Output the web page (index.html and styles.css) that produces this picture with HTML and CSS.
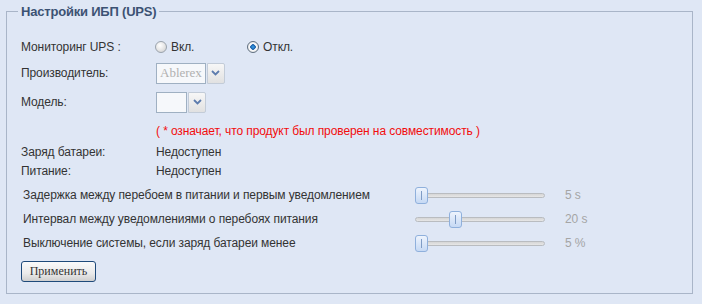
FILE: index.html
```html
<!DOCTYPE html>
<html lang="ru">
<head>
  <meta charset="UTF-8" />
  <title>Настройки ИБП (UPS)</title>
  <link rel="stylesheet" href="styles.css">
</head>
<body>
  <fieldset class="ups">
    <legend>Настройки ИБП (UPS)</legend>

    <div class="row">
      <span class="label">Мониторинг UPS :</span>
      <label class="radio"><input type="radio" name="mon"> Вкл.</label>
      <label class="radio"><input type="radio" name="mon" checked> Откл.</label>
    </div>

    <div class="row maker">
      <span class="label">Производитель:</span>
      <div class="select disabled">
        <span class="select-text">Ablerex</span>
        <span class="select-arrow"><svg width="9" height="6" viewBox="0 0 9 6"><path d="M1 1 L4.5 4.5 L8 1" fill="none" stroke="#5d7cae" stroke-width="1.8"/></svg></span>
      </div>
    </div>

    <div class="row model">
      <span class="label">Модель:</span>
      <div class="select">
        <span class="select-text empty"></span>
        <span class="select-arrow"><svg width="9" height="6" viewBox="0 0 9 6"><path d="M1 1 L4.5 4.5 L8 1" fill="none" stroke="#5d7cae" stroke-width="1.8"/></svg></span>
      </div>
    </div>

    <div class="row note">( * означает, что продукт был проверен на совместимость )</div>

    <div class="row short">
      <span class="label">Заряд батареи:</span>
      <span>Недоступен</span>
    </div>
    <div class="row short">
      <span class="label">Питание:</span>
      <span>Недоступен</span>
    </div>

    <div class="sliders">
      <div class="srow">
        <span class="slabel">Задержка между перебоем в питании и первым уведомлением</span>
        <div class="track"><span class="thumb" style="left: -1px"></span></div>
        <span class="value">5 s</span>
      </div>
      <div class="srow">
        <span class="slabel">Интервал между уведомлениями о перебоях питания</span>
        <div class="track"><span class="thumb" style="left: 33px"></span></div>
        <span class="value">20 s</span>
      </div>
      <div class="srow">
        <span class="slabel">Выключение системы, если заряд батареи менее</span>
        <div class="track"><span class="thumb" style="left: -1px"></span></div>
        <span class="value">5 %</span>
      </div>
    </div>

    <button class="apply">Применить</button>
  </fieldset>
</body>
</html>
```

FILE: styles.css
```css
* { box-sizing: border-box; }

body {
  margin: 0;
  background: #dfe7f5;
  font-family: 'Liberation Sans', Arial, sans-serif;
  font-size: 12px;
  letter-spacing: -0.1px;
  color: #333;
}

.ups {
  margin: 4px 9px 0 6px;
  height: 290px;
  border: 1px solid #a9b5c8;
  border-radius: 0;
  padding: 17px 14px 0 14px;
}

.ups legend {
  font-weight: bold;
  font-size: 13px;
  letter-spacing: -0.2px;
  color: #3c5273;
  padding: 0 3px;
  margin-left: -3px;
}

.row {
  display: flex;
  align-items: center;
  height: 22px;
}

.row.maker { margin-top: 4px; }
.row.model { margin-top: 7px; }
.row.note { margin-top: 7px; }
.row.short { height: 19px; }

.label {
  width: 135px;
  flex-shrink: 0;
}

.radio {
  display: flex;
  align-items: center;
  width: 93px;
  margin-left: -1px;
}

.radio input {
  appearance: none;
  -webkit-appearance: none;
  width: 12px;
  height: 12px;
  margin: 0 4px 0 0;
  border-radius: 50%;
  border: 1px solid #9aa3ad;
  background: radial-gradient(circle at 40% 35%, #fff 0%, #e4e4e4 55%, #c9c9c9 100%);
}

.radio input:checked {
  border-color: #5f6f80;
  background: radial-gradient(circle, #3aa0e8 0, #1b5fa8 2.5px, #fff 3px, #e8e8e8 5px);
}

.select {
  display: flex;
  height: 21px;
}

.select-text {
  display: flex;
  align-items: center;
  height: 21px;
  padding: 0 3px;
  border: 1px solid #9fb0c2;
  background: #f6f8fb;
  font-family: 'Liberation Serif', 'Times New Roman', serif;
  font-size: 13px;
  letter-spacing: 0;
  color: #b0b0b0;
}

.select-text.empty { width: 31px; }

.select-arrow {
  display: flex;
  align-items: center;
  justify-content: center;
  width: 18px;
  height: 21px;
  margin-left: 1px;
  border: 1px solid #c3ccd8;
  border-radius: 0 2px 2px 0;
  background: linear-gradient(#f7f7f7, #e1e1e1);
}

.note {
  padding-left: 135px;
  color: #f20d0d;
}

.sliders {
  margin-top: 3px;
  padding-left: 2px;
}

.srow {
  display: flex;
  align-items: center;
  height: 24px;
}

.slabel { width: 392px; flex-shrink: 0; }

.track {
  position: relative;
  width: 130px;
  height: 5px;
  border: 1px solid #b9bcc0;
  border-radius: 3px;
  background: linear-gradient(#d6d6d6, #e6e6e6);
}

.thumb {
  position: absolute;
  top: -7px;
  width: 13px;
  height: 17px;
  border: 1px solid #8fb0dc;
  border-radius: 3px;
  background: linear-gradient(#eef4fd, #c6d9f4);
}

.thumb::after {
  content: "";
  position: absolute;
  left: 5px;
  top: 3px;
  width: 1px;
  height: 9px;
  background: #7f9cc5;
}

.value {
  margin-left: 20px;
  color: #a5a5a5;
}

.apply {
  margin-top: 6px;
  width: 75px;
  height: 21px;
  padding: 0;
  border: 1px solid #1f4a7a;
  border-radius: 3px;
  background: linear-gradient(#fafafa 0%, #eaeaea 60%, #cfcfcf 100%);
  font-family: 'Liberation Serif', 'Times New Roman', serif;
  font-size: 12px;
  color: #333;
}
```
